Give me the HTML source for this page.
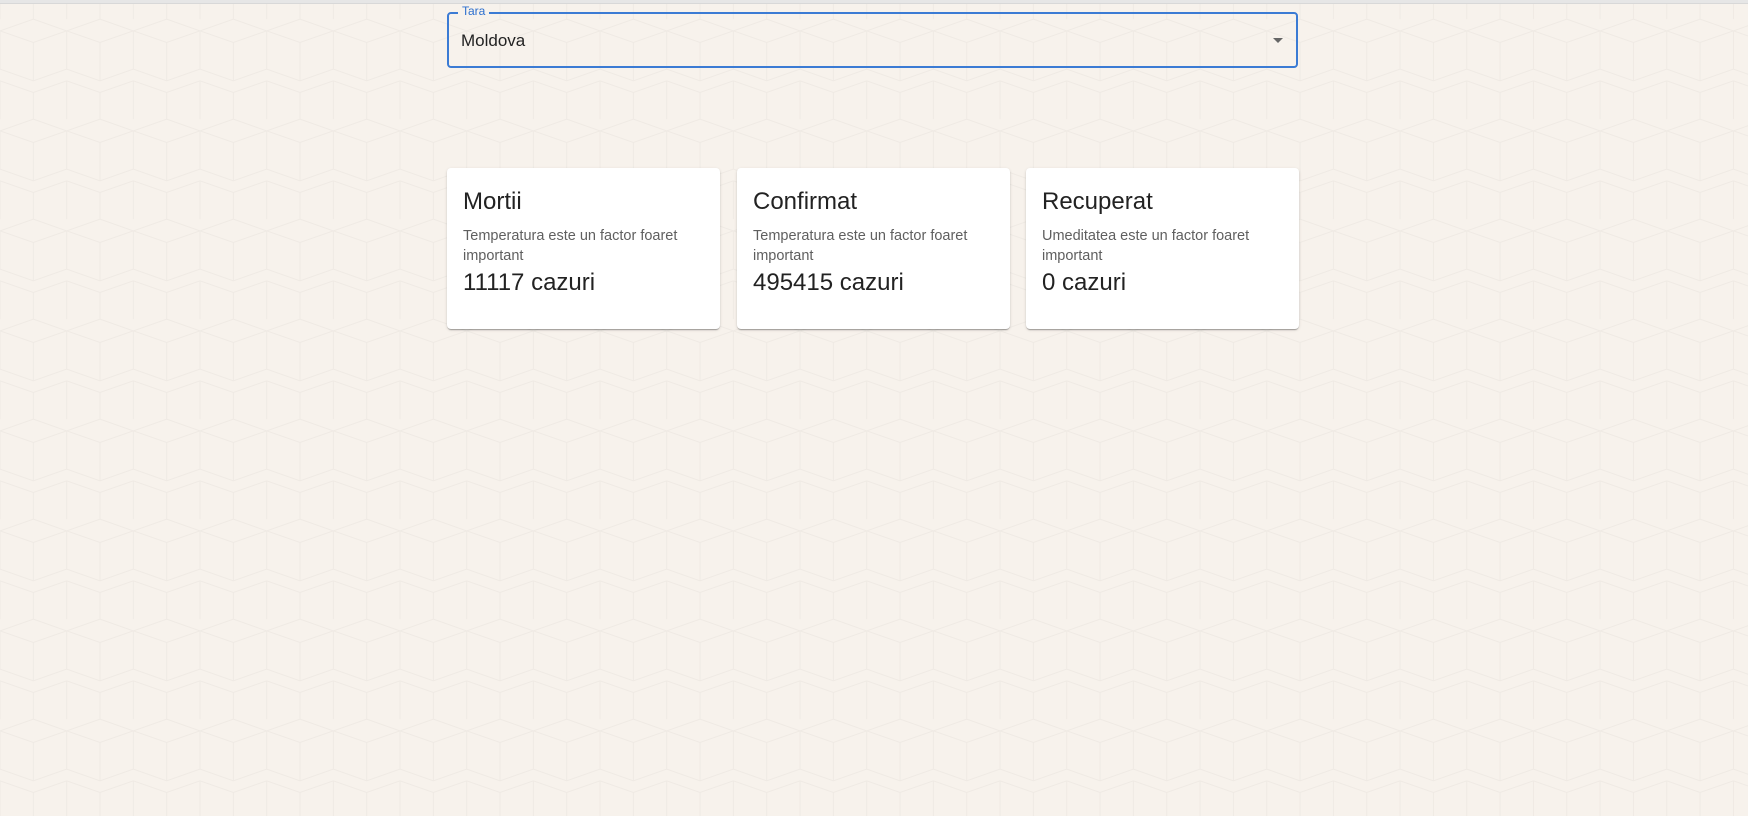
<!DOCTYPE html>
<html><head><meta charset="utf-8"><style>
html,body{margin:0;padding:0;width:1748px;height:816px;overflow:hidden;font-family:"Liberation Sans",Arial,sans-serif;background:#f7f2ec;}
.bg{position:absolute;left:0;top:0;width:1748px;height:816px}
.topbar{position:absolute;left:0;top:0;width:1748px;height:3px;background:#e6e6e6;border-bottom:1px solid #d8d8d8}
.sel{position:absolute;left:447px;top:12px;width:851px;height:56px;border:2px solid #3b7bd4;border-radius:4px;box-sizing:border-box}
.lbl{position:absolute;left:458px;top:4px;padding:0 4px;background:#f7f2ec;color:#2c6fce;font-size:12px;line-height:14px}
.val{position:absolute;left:461px;top:31px;font-size:17px;color:#222}
.arr{position:absolute;left:1273px;top:38px;width:0;height:0;border-left:5px solid transparent;border-right:5px solid transparent;border-top:5px solid #666}
.card{position:absolute;top:168px;width:273px;height:161px;background:#fff;border-radius:4px;box-shadow:0 2px 1px -1px rgba(0,0,0,.2),0 1px 1px rgba(0,0,0,.14),0 1px 3px rgba(0,0,0,.12);box-sizing:border-box;padding:19px 16px}
.card h2{margin:0;font-weight:400;font-size:24px;line-height:30px;color:#222}
.card p{margin:9px 0 0;font-size:14.5px;line-height:20px;color:#5f5f5f}
.card .n{font-size:24px;line-height:30px;color:#222;margin-top:2px}
</style></head><body>
<svg class="bg" xmlns="http://www.w3.org/2000/svg"><defs><pattern id="p" width="66.67" height="100" patternUnits="userSpaceOnUse">
<g fill="none" stroke="#efeae4" stroke-width="1">
<path d="M33.33,19.15 L66.67,30.85 L66.67,69.15 L33.33,80.85 L0,69.15 L0,30.85 Z M0,30.85 L33.33,42.5 L66.67,30.85 M33.33,42.5 L33.33,80.85"/>
<path d="M0,80.85 L0,119.15 M66.67,80.85 L66.67,119.15 M0,-19.15 L33.33,-7.5 L66.67,-19.15 M33.33,-7.5 L33.33,19.15 M-33.33,-30.85 L0,-19.15 M66.67,-19.15 L100,-30.85 M0,80.85 L33.33,92.5 L66.67,80.85 M33.33,92.5 L33.33,119.15 M0,-19.15 L0,19.15 M66.67,-19.15 L66.67,19.15 M0,19.15 L-33.33,30.85 M66.67,19.15 L100,30.85"/>
</g></pattern></defs><rect width="1748" height="816" fill="url(#p)"/></svg>
<div class="topbar"></div>
<div class="sel"></div>
<div class="lbl">Tara</div>
<div class="val">Moldova</div>
<div class="arr"></div>
<div class="card" style="left:447px"><h2>Mortii</h2><p>Temperatura este un factor foaret important</p><div class="n">11117 cazuri</div></div>
<div class="card" style="left:737px"><h2>Confirmat</h2><p>Temperatura este un factor foaret important</p><div class="n">495415 cazuri</div></div>
<div class="card" style="left:1026px"><h2>Recuperat</h2><p>Umeditatea este un factor foaret important</p><div class="n">0 cazuri</div></div>
</body></html>
